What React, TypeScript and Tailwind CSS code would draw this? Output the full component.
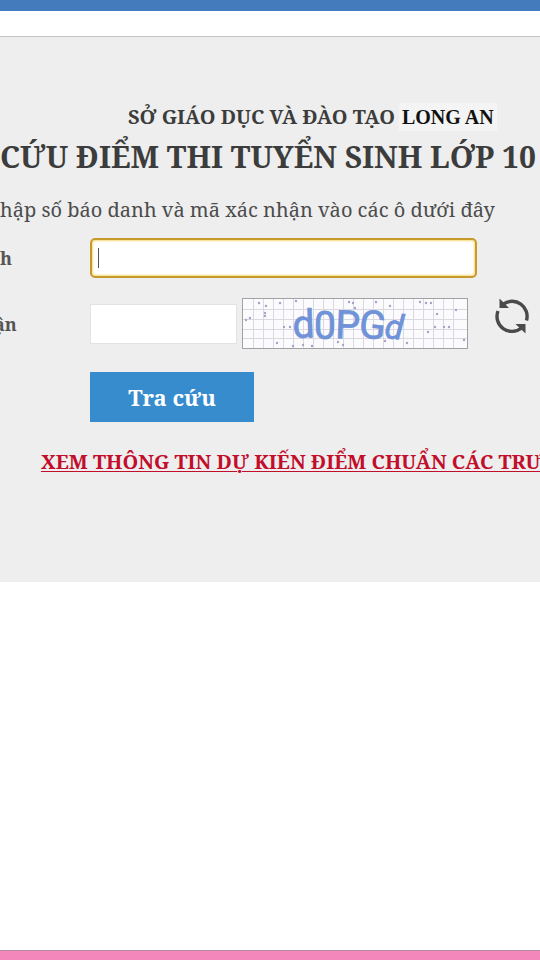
import { useState } from "react";

const captcha = [
  { char: "d", x: 293, y: 338, angle: -2, italic: false },
  { char: "0", x: 314, y: 339, angle: 0, italic: false },
  { char: "P", x: 335, y: 338, angle: 2, italic: false },
  { char: "G", x: 358, y: 337, angle: 6, italic: false },
  { char: "d", x: 384, y: 338, angle: 5, italic: true },
];

const specks = [
  [259, 303], [266, 306], [265, 313], [265, 316], [250, 318], [246, 320], [280, 303],
  [296, 301], [284, 327], [290, 327], [277, 343], [293, 346], [303, 345], [312, 346],
  [338, 342], [343, 345], [349, 302], [353, 303], [355, 308], [376, 302], [390, 306],
  [407, 343], [420, 302], [426, 303], [431, 303], [437, 314], [428, 332], [444, 327],
  [456, 310], [449, 327], [464, 340], [435, 327], [385, 341],
];

function Captcha() {
  return (
    <svg
      className="block h-[52px] w-[226px] shrink-0"
      viewBox="242 298 226 52"
      role="img"
      aria-label="d0PGd"
    >
      <rect x="242.5" y="298.5" width="225" height="50" fill="#fbfbfd" stroke="#a2a2a2" />
      <g stroke="#dbd9df">
        {Array.from({ length: 21 }, (_, i) => (
          <path key={i} d={`M${253.5 + i * 10} 299V348`} />
        ))}
        {[309.5, 319.5, 329.5, 338.5].map((y) => (
          <path key={y} d={`M243 ${y}H467`} />
        ))}
      </g>
      <g fill="#a3a4c6">
        {specks.map(([x, y]) => (
          <circle key={`${x}-${y}`} cx={x} cy={y} r="1.2" />
        ))}
      </g>
      <g
        className="font-['Liberation_Sans_Narrow','Roboto',Arial,sans-serif]"
        fontSize="39"
        fill="#6f92d8"
        stroke="#6f92d8"
        strokeWidth="0.8"
      >
        {captcha.map((c) => (
          <text
            key={c.x}
            x={c.x}
            y={c.y}
            fontSize={c.italic ? 34 : 39}
            fontStyle={c.italic ? "italic" : "normal"}
            transform={`rotate(${c.angle} ${c.x} ${c.y})`}
          >
            {c.char}
          </text>
        ))}
      </g>
    </svg>
  );
}

function RefreshIcon() {
  return (
    <svg className="h-9 w-9" viewBox="494 297 36 36" fill="none" aria-hidden="true">
      <g stroke="#4a4a4a" strokeWidth="3.4">
        <path d="M503.500 303A15 15 0 0 1 526.500 319.500" />
        <path d="M521.500 327A15 15 0 0 1 498 310" />
      </g>
      <path d="M499.500 297.500V307H509Z" fill="#4a4a4a" />
      <path d="M525.500 332.500V323H515.500Z" fill="#4a4a4a" />
    </svg>
  );
}

export default function App() {
  const [candidate, setCandidate] = useState("");
  const [code, setCode] = useState("");

  return (
    <div className="flex min-h-screen flex-col overflow-hidden bg-white font-['Noto_Serif','DejaVu_Serif_Condensed','DejaVu_Serif','Liberation_Serif',serif] text-[#3c3c3c]">
      <header className="h-9 border-t-[11px] border-[#437bbd]" />
      <main className="border-t border-[#c4c4c4] bg-[#eeeeee] pt-16 pb-[104px]">
        <p className="flex items-center pl-32 text-[20px] leading-8 font-bold whitespace-nowrap">
          SỞ GIÁO DỤC VÀ ĐÀO TẠO
          <span className="ml-1 bg-[#f4f4f4] px-[3px] font-['Liberation_Serif',serif] text-[20px] leading-7 text-[#111111]">
            LONG AN
          </span>
        </p>
        <h1 className="text-[30px] leading-12 font-bold whitespace-nowrap">
          CỨU ĐIỂM THI TUYỂN SINH LỚP 10
        </h1>
        <p className="pt-[13px] text-[20px] leading-8 whitespace-nowrap text-[#4c4c4c]">
          hập số báo danh và mã xác nhận vào các ô dưới đây
        </p>

        <form className="pt-3" onSubmit={(e) => e.preventDefault()}>
          <div className="flex items-center">
            <label htmlFor="candidate" className="w-[90px] shrink-0 text-[18px] font-bold text-[#555555]">
              h
            </label>
            <div className="mr-[63px] flex h-10 grow items-center rounded-[5px] border-2 border-[#c79a2c] bg-white px-[6px] shadow-[inset_0_0_2px_1px_#f5dc7a]">
              <span className="h-5 w-px bg-[#555555]" />
              <input
                id="candidate"
                className="h-full min-w-0 grow bg-transparent text-[18px] outline-none"
                value={candidate}
                onChange={(e) => setCandidate(e.target.value)}
              />
            </div>
          </div>
          <div className="flex items-center pt-5">
            <label htmlFor="code" className="-ml-[6px] w-24 shrink-0 text-[18px] font-bold text-[#555555]">
              ận
            </label>
            <input
              id="code"
              className="h-10 w-[147px] border border-[#e2e2e2] bg-white px-2 text-[18px] outline-none"
              value={code}
              onChange={(e) => setCode(e.target.value)}
            />
            <span className="ml-[5px]">
              <Captcha />
            </span>
            <button type="button" aria-label="Refresh" className="ml-[26px] self-start">
              <RefreshIcon />
            </button>
          </div>
          <button
            type="submit"
            className="mt-[22px] ml-[90px] h-[50px] w-[164px] bg-[#378ccd] text-[22px] font-bold text-white"
          >
            Tra cứu
          </button>
        </form>

        <p className="pt-6 pl-[41px] text-[20px] leading-8 font-bold whitespace-nowrap text-[#c20d2b]">
          <a href="#" className="underline decoration-1 underline-offset-2">
            XEM THÔNG TIN DỰ KIẾN ĐIỂM CHUẨN CÁC TRƯ
          </a>
        </p>
      </main>
      <footer className="mt-auto h-[10px] border-t border-[#b08aa0] bg-[#f386ba]" />
    </div>
  );
}
